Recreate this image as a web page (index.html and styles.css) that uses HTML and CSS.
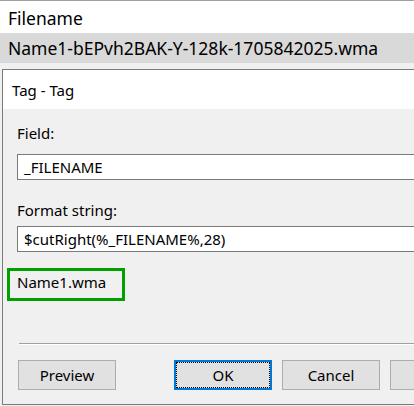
FILE: index.html
```html
<!DOCTYPE html>
<html>
<head>
<meta charset="utf-8">
<link rel="stylesheet" href="styles.css">
</head>
<body>
<div class="list">
  <div class="list-head">Filename</div>
  <div class="list-row selected">Name1-bEPvh2BAK-Y-128k-1705842025.wma</div>
  <div class="list-strip"></div>
</div>
<div class="dialog">
  <div class="title">Tag - Tag</div>
  <div class="body">
    <div class="label label-field">Field:</div>
    <div class="input input-field">_FILENAME</div>
    <div class="label label-format">Format string:</div>
    <div class="input input-format">$cutRight(%_FILENAME%,28)</div>
    <div class="result">Name1.wma</div>
    <div class="separator"></div>
    <div class="buttons">
      <div class="btn">Preview</div>
      <div class="btn btn-default">OK</div>
      <div class="btn">Cancel</div>
      <div class="btn btn-cut"></div>
    </div>
  </div>
</div>
</body>
</html>
```

FILE: styles.css
```css
html, body {
  margin: 0;
  padding: 0;
  width: 414px;
  height: 406px;
  overflow: hidden;
  background: #f0f0f0;
  font-family: "Noto Sans", "Open Sans", sans-serif;
  color: #000;
}

.list {
  background: #fff;
  border-top: 1px solid #a0a0a0;
}

.list-head {
  height: 32px;
  box-sizing: border-box;
  padding: 3px 0 0 8px;
  line-height: 29px;
  font-size: 17.5px;
  background: #fff;
  white-space: nowrap;
}

.list-row {
  height: 30px;
  line-height: 30px;
  padding-left: 8px;
  font-size: 17.5px;
  white-space: nowrap;
}

.list-row.selected {
  background: #d9d9d9;
}

.list-strip {
  height: 6px;
  background: #f0f0f0;
}

.dialog {
  margin-left: 2px;
  border: 1px solid #7a7a7a;
  border-right: none;
  background: #f0f0f0;
  font-size: 15px;
}

.title {
  height: 39px;
  box-sizing: border-box;
  padding: 2px 0 0 9px;
  line-height: 37px;
  background: #fff;
}

.body {
  padding: 14px 0 14px 0;
}

.label {
  line-height: 20px;
  padding-left: 14px;
}

.input {
  margin-left: 14px;
  height: 26px;
  box-sizing: border-box;
  border: 1px solid #7a7a7a;
  border-right: none;
  background: #fff;
  padding-left: 6px;
  line-height: 24px;
  white-space: nowrap;
}

.input-field {
  margin-top: 11px;
}

.label-format {
  margin-top: 20px;
}

.input-format {
  margin-top: 6px;
}

.result {
  margin: 16px 0 0 4px;
  width: 118px;
  height: 33px;
  box-sizing: border-box;
  border: 3px solid #00a000;
  padding: 1px 0 0 7px;
  line-height: 20px;
}

.separator {
  margin: 42px 0 0 16px;
  height: 1px;
  background: #a0a0a0;
  border-bottom: 1px solid #fff;
}

.buttons {
  display: flex;
  gap: 10px;
  margin: 15px 0 0 15px;
}

.btn {
  width: 98px;
  height: 30px;
  box-sizing: border-box;
  border: 1px solid #adadad;
  background: #e1e1e1;
  display: flex;
  align-items: center;
  justify-content: center;
  flex: none;
}

.btn:first-child {
  margin-right: 48px;
}

.btn-default {
  border: 2px solid #0078d7;
  outline: 1px dotted #000;
  outline-offset: -3px;
}

.btn-cut {
  flex: 1 1 auto;
  width: auto;
  border-right: none;
}
```
